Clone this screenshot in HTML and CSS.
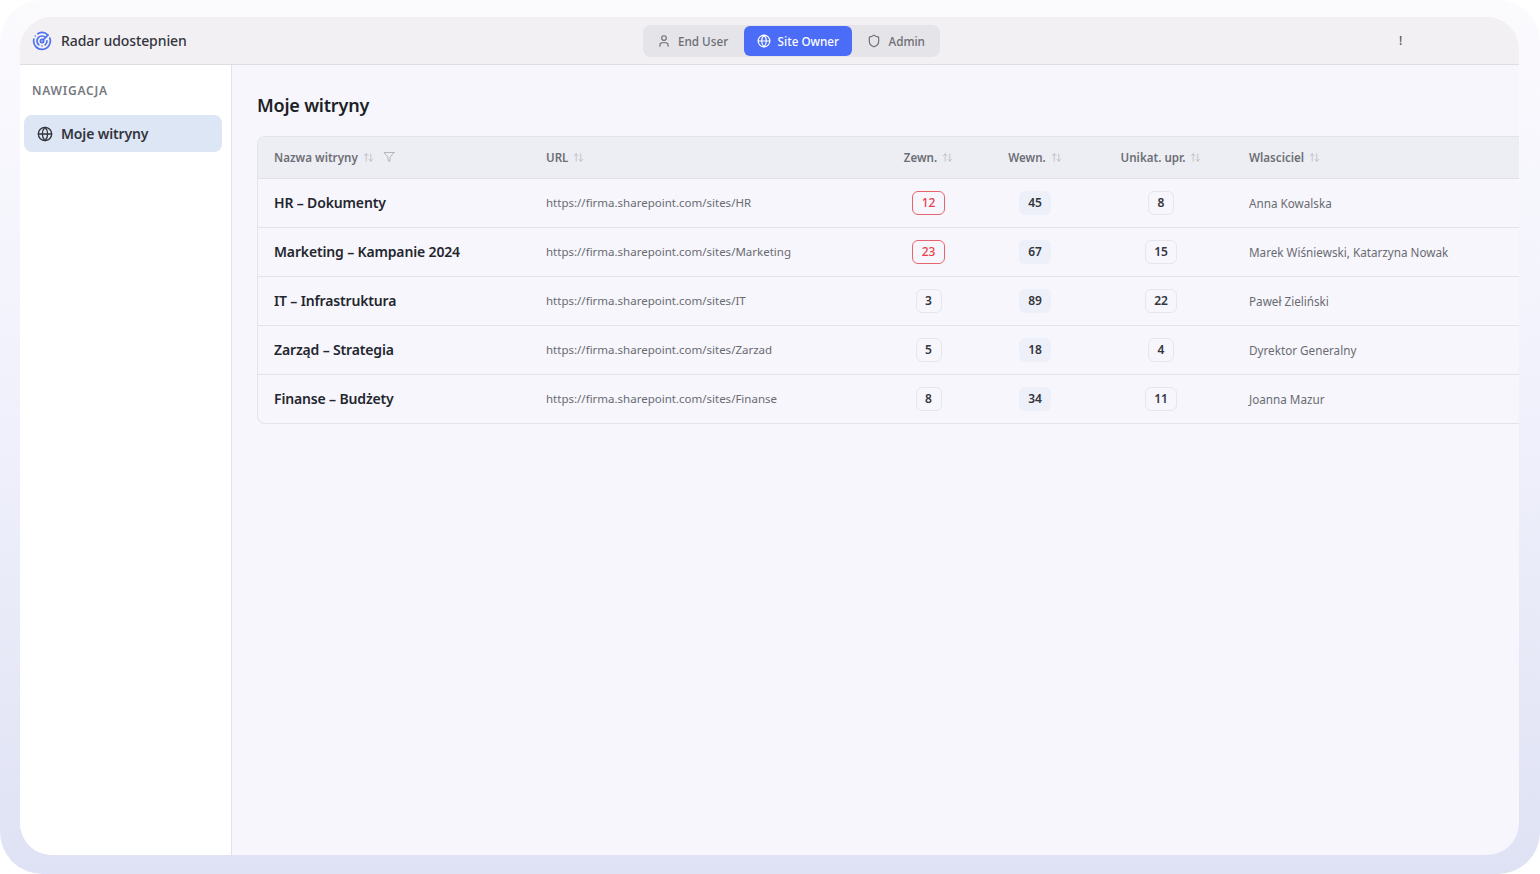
FILE: index.html
```html
<!DOCTYPE html>
<html lang="pl">
<head>
  <meta charset="UTF-8" />
  <meta name="viewport" content="width=device-width, initial-scale=1.0"/>
  <title>Radar udostepnien</title>
  <link rel="stylesheet" href="styles.css">
</head>
<body>
  <div class="frame">
    <div class="window">
      <header class="topbar">
        <div class="brand">
          <svg class="brand-icon" viewBox="0 0 24 24"><path d="M19.07 4.93A10 10 0 0 0 6.99 3.34"/><path d="M4 6h.01"/><path d="M2.29 9.62A10 10 0 1 0 21.31 8.35"/><path d="M16.24 7.76A6 6 0 1 0 8.23 16.67"/><path d="M12 18h.01"/><path d="M17.99 11.66A6 6 0 0 1 15.77 16.67"/><circle cx="12" cy="12" r="2"/><path d="m13.41 10.59 5.66-5.66"/></svg>
          <span>Radar udostepnien</span>
        </div>
        <nav class="roles">
          <button class="role">
            <svg class="icon" viewBox="0 0 24 24"><path d="M19 21v-2a4 4 0 0 0-4-4H9a4 4 0 0 0-4 4v2"/><circle cx="12" cy="7" r="4"/></svg>
            End User
          </button>
          <button class="role active">
            <svg class="icon" viewBox="0 0 24 24"><circle cx="12" cy="12" r="10"/><path d="M12 2a14.5 14.5 0 0 0 0 20 14.5 14.5 0 0 0 0-20"/><path d="M2 12h20"/></svg>
            Site Owner
          </button>
          <button class="role">
            <svg class="icon" viewBox="0 0 24 24"><path d="M20 13c0 5-3.5 7.5-7.66 8.95a1 1 0 0 1-.67-.01C7.5 20.5 4 18 4 13V6a1 1 0 0 1 1-1c2 0 4.5-1.2 6.24-2.72a1.17 1.17 0 0 1 1.52 0C14.51 3.81 17 5 19 5a1 1 0 0 1 1 1z"/></svg>
            Admin
          </button>
        </nav>
        <span class="bang">!</span>
      </header>

      <div class="body">
        <aside class="sidebar">
          <div class="side-label">NAWIGACJA</div>
          <a class="side-item">
            <svg class="side-icon" viewBox="0 0 24 24"><circle cx="12" cy="12" r="10"/><path d="M12 2a14.5 14.5 0 0 0 0 20 14.5 14.5 0 0 0 0-20"/><path d="M2 12h20"/></svg>
            Moje witryny
          </a>
        </aside>

        <main class="content">
          <h1>Moje witryny</h1>
          <div class="table-wrap">
            <table>
              <colgroup>
                <col class="c-name"><col class="c-url"><col class="c-ext"><col class="c-int"><col class="c-uniq"><col>
              </colgroup>
              <thead>
                <tr>
                  <th>Nazwa witryny <svg class="sort" viewBox="0 0 24 24"><path d="M7 20V4"/><path d="m3 8 4-4 4 4"/><path d="M17 4v16"/><path d="m21 16-4 4-4-4"/></svg><svg class="filter" viewBox="0 0 24 24"><path d="M22 3H2l8 9.46V19l4 2v-8.54L22 3z"/></svg></th>
                  <th>URL <svg class="sort" viewBox="0 0 24 24"><path d="M7 20V4"/><path d="m3 8 4-4 4 4"/><path d="M17 4v16"/><path d="m21 16-4 4-4-4"/></svg></th>
                  <th class="num">Zewn. <svg class="sort" viewBox="0 0 24 24"><path d="M7 20V4"/><path d="m3 8 4-4 4 4"/><path d="M17 4v16"/><path d="m21 16-4 4-4-4"/></svg></th>
                  <th class="num">Wewn. <svg class="sort" viewBox="0 0 24 24"><path d="M7 20V4"/><path d="m3 8 4-4 4 4"/><path d="M17 4v16"/><path d="m21 16-4 4-4-4"/></svg></th>
                  <th class="num">Unikat. upr. <svg class="sort" viewBox="0 0 24 24"><path d="M7 20V4"/><path d="m3 8 4-4 4 4"/><path d="M17 4v16"/><path d="m21 16-4 4-4-4"/></svg></th>
                  <th class="owner">Wlasciciel <svg class="sort" viewBox="0 0 24 24"><path d="M7 20V4"/><path d="m3 8 4-4 4 4"/><path d="M17 4v16"/><path d="m21 16-4 4-4-4"/></svg></th>
                </tr>
              </thead>
              <tbody>
                <tr>
                  <td class="name">HR – Dokumenty</td>
                  <td class="url">https://firma.sharepoint.com/sites/HR</td>
                  <td class="num"><span class="tag danger">12</span></td>
                  <td class="num"><span class="tag soft">45</span></td>
                  <td class="num"><span class="tag plain">8</span></td>
                  <td class="owner">Anna Kowalska</td>
                </tr>
                <tr>
                  <td class="name">Marketing – Kampanie 2024</td>
                  <td class="url">https://firma.sharepoint.com/sites/Marketing</td>
                  <td class="num"><span class="tag danger">23</span></td>
                  <td class="num"><span class="tag soft">67</span></td>
                  <td class="num"><span class="tag plain">15</span></td>
                  <td class="owner">Marek Wiśniewski, Katarzyna Nowak</td>
                </tr>
                <tr>
                  <td class="name">IT – Infrastruktura</td>
                  <td class="url">https://firma.sharepoint.com/sites/IT</td>
                  <td class="num"><span class="tag plain">3</span></td>
                  <td class="num"><span class="tag soft">89</span></td>
                  <td class="num"><span class="tag plain">22</span></td>
                  <td class="owner">Paweł Zieliński</td>
                </tr>
                <tr>
                  <td class="name">Zarząd – Strategia</td>
                  <td class="url">https://firma.sharepoint.com/sites/Zarzad</td>
                  <td class="num"><span class="tag plain">5</span></td>
                  <td class="num"><span class="tag soft">18</span></td>
                  <td class="num"><span class="tag plain">4</span></td>
                  <td class="owner">Dyrektor Generalny</td>
                </tr>
                <tr>
                  <td class="name">Finanse – Budżety</td>
                  <td class="url">https://firma.sharepoint.com/sites/Finanse</td>
                  <td class="num"><span class="tag plain">8</span></td>
                  <td class="num"><span class="tag soft">34</span></td>
                  <td class="num"><span class="tag plain">11</span></td>
                  <td class="owner">Joanna Mazur</td>
                </tr>
              </tbody>
            </table>
          </div>
        </main>
      </div>
    </div>
  </div>
</body>
</html>
```

FILE: styles.css
```css
html, body {
  margin: 0;
  padding: 0;
  height: 100%;
  background: white;
  font-family: 'Noto Sans', 'Open Sans', sans-serif;
  overflow: hidden;
}

svg {
  fill: none;
  stroke: currentColor;
  stroke-width: 2;
  stroke-linecap: round;
  stroke-linejoin: round;
  flex-shrink: 0;
}

.frame {
  box-sizing: border-box;
  height: 874px;
  padding: 17px 21px 19px 20px;
  border-radius: 42px;
  background: linear-gradient(180deg, #fbfbfe 0%, #eff0fb 50%, #dfe2f4 100%);
}

.window {
  height: 100%;
  display: flex;
  flex-direction: column;
  border-radius: 32px;
  overflow: hidden;
  background: #f6f6fc;
}

/* top bar */
.topbar {
  box-sizing: border-box;
  height: 48px;
  flex-shrink: 0;
  display: flex;
  align-items: center;
  position: relative;
  padding-left: 12px;
  background: #f2f0f3;
  border-bottom: 1px solid #dedde2;
}

.brand {
  display: flex;
  align-items: center;
  gap: 9px;
  font-size: 14px;
  font-weight: 500;
  letter-spacing: -0.1px;
  color: #33353d;
}

.brand-icon {
  width: 20px;
  height: 20px;
  color: #4f72ee;
}

.roles {
  position: absolute;
  left: 623px;
  top: 8px;
  display: flex;
  gap: 2.5px;
  height: 32px;
  padding: 0 2px 0 1px;
  border-radius: 8px;
  background: #e5e4e8;
}

.role {
  display: flex;
  align-items: center;
  gap: 7px;
  height: 32px;
  padding: 0 13px;
  border: none;
  border-radius: 6px;
  background: none;
  font-family: inherit;
  font-size: 11.7px;
  font-weight: 500;
  color: #6d6e75;
}

.role .icon {
  width: 14px;
  height: 14px;
}

.role.active {
  height: 30px;
  margin-top: 1px;
  background: #4a6cf7;
  color: white;
}

.bang {
  position: absolute;
  left: 1379px;
  top: 15px;
  font-size: 12px;
  font-weight: 500;
  color: #55565c;
}

.body {
  flex: 1;
  display: flex;
  min-height: 0;
}

/* sidebar */
.sidebar {
  box-sizing: border-box;
  width: 212px;
  flex-shrink: 0;
  padding: 17px 9px 0 4px;
  background: white;
  border-right: 1px solid #e2e2ea;
}

.side-label {
  padding-left: 8px;
  margin-bottom: 16px;
  font-size: 12px;
  font-weight: 600;
  letter-spacing: 0.75px;
  color: #77787f;
}

.side-item {
  display: flex;
  align-items: center;
  gap: 8px;
  height: 37px;
  padding-left: 13px;
  border-radius: 8px;
  background: #dde6f5;
  font-size: 14px;
  font-weight: 600;
  letter-spacing: -0.15px;
  color: #33353d;
}

.side-icon {
  width: 16px;
  height: 16px;
}

/* main */
.content {
  flex: 1;
  min-width: 0;
  padding: 28px 0 0 25px;
}

.content h1 {
  margin: 0 0 18px;
  font-size: 18px;
  line-height: 25px;
  font-weight: 600;
  letter-spacing: -0.2px;
  color: #1d1f26;
}

.table-wrap {
  border: 1px solid #e3e3ea;
  border-right: none;
  border-radius: 8px 0 0 8px;
  overflow: hidden;
}

table {
  width: 100%;
  table-layout: fixed;
  border-collapse: collapse;
}

.c-name { width: 272px; }
.c-url { width: 358px; }
.c-ext { width: 81px; }
.c-int { width: 132px; }
.c-uniq { width: 120px; }

th {
  height: 41px;
  padding: 0 16px;
  box-sizing: border-box;
  background: #edeef3;
  border-bottom: 1px solid #e0e0e7;
  text-align: left;
  font-size: 11.6px;
  font-weight: 600;
  color: #6d6e77;
  white-space: nowrap;
}

td {
  height: 49px;
  padding: 0 16px;
  box-sizing: border-box;
  border-bottom: 1px solid #e3e3ea;
  font-size: 11.7px;
  color: #6a6b72;
  white-space: nowrap;
}

tbody tr:last-child td {
  border-bottom: none;
}

th.num, td.num {
  padding: 0;
  text-align: center;
}

th.owner, td.owner {
  padding-left: 28px;
}

td.name {
  font-size: 14px;
  font-weight: 600;
  letter-spacing: -0.15px;
  color: #24262e;
}

td.url {
  font-size: 11.5px;
}

.sort {
  width: 11px;
  height: 11px;
  margin-left: 2px;
  vertical-align: -1px;
  color: #b3b4bb;
  stroke-width: 1.6;
}

.filter {
  width: 12px;
  height: 12px;
  margin-left: 9px;
  vertical-align: -1px;
  color: #a3a4ab;
  stroke-width: 1.5;
}

.tag {
  display: inline-block;
  box-sizing: border-box;
  height: 24px;
  min-width: 26px;
  padding: 0 8px;
  border-radius: 6px;
  border: 1px solid transparent;
  font-size: 12px;
  font-weight: 600;
  line-height: 22px;
  color: #33353d;
}

.tag.danger {
  width: 33px;
  border: 1.5px solid #e8646c;
  line-height: 21px;
  color: #e8414b;
  font-weight: 500;
}

.tag.soft {
  background: #edf0f8;
}

.tag.plain {
  border: 1.5px solid #e6e6ed;
  line-height: 21px;
}
```
